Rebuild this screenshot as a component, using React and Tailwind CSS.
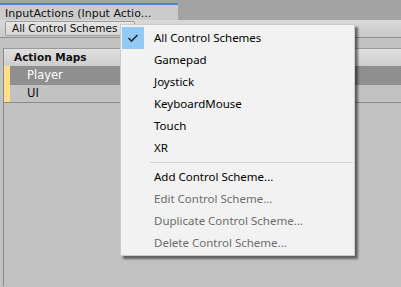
export default function App() {
  const items = ["All Control Schemes", "Gamepad", "Joystick", "KeyboardMouse", "Touch", "XR"];
  const actions = [
    { t: "Add Control Scheme...", d: false },
    { t: "Edit Control Scheme...", d: true },
    { t: "Duplicate Control Scheme...", d: true },
    { t: "Delete Control Scheme...", d: true },
  ];
  const unity = { fontFamily: '"DejaVu Sans", Verdana, sans-serif' };
  const seg = { fontFamily: '"Noto Sans", "Open Sans", sans-serif' };
  return (
    <div className="relative w-[401px] h-[287px] overflow-hidden bg-[#c2c2c2]" style={unity}>
      {/* tab strip */}
      <div className="h-[20px] bg-[#a3a3a3] flex items-end">
        <div className="w-[178px] h-[17px] bg-[#cbcbcb] border-t-2 border-[#4d86c9] flex items-center pl-[5px] pt-[1px] text-[11px] text-[#111] leading-none">
          InputActions (Input Actio...
        </div>
      </div>
      {/* toolbar */}
      <div className="h-[18px] bg-gradient-to-b from-[#d9d9d9] to-[#c9c9c9] border-b border-[#8f8f8f] flex items-center pl-[5px]">
        <div className="h-[15px] w-[130px] bg-gradient-to-b from-[#e6e6e6] to-[#d6d6d6] border border-[#9c9c9c] rounded-[2px] flex items-center pl-[6px] text-[10.5px] text-[#111] leading-none">
          All Control Schemes <span className="ml-[4px] text-[8px]">▾</span>
        </div>
      </div>
      {/* body */}
      <div className="pt-[10px] pl-[3px] h-[248px]">
        <div className="h-full border-l border-[#8a8a8a]">
          <div className="h-[18px] bg-gradient-to-b from-[#e0e0e0] to-[#cdcdcd] border-t border-[#9a9a9a] flex items-center pl-[10px] pt-[1px] text-[10.5px] font-bold text-[#111]">
            Action Maps
          </div>
          <div className="h-[19px] bg-[#8f8f8f] flex items-center text-white text-[11.5px]">
            <div className="w-[6px] h-full bg-[#ffdf8c]" />
            <span className="ml-[17px]">Player</span>
          </div>
          <div className="h-[18px] bg-[#c2c2c2] border-b border-[#8a8a8a] flex items-center text-[#111] text-[11.5px]">
            <div className="w-[6px] h-full bg-[#ffdf8c]" />
            <span className="ml-[17px]">UI</span>
          </div>
        </div>
      </div>
      {/* menu */}
      <div
        className="absolute left-[120px] top-[24px] w-[235px] h-[232px] bg-[#f2f2f2] border border-[#cccccc] shadow-[3px_3px_2px_rgba(0,0,0,0.5)] pt-[2px]"
        style={seg}
      >
        {items.map((t, i) => (
          <div key={t} className="h-[22px] flex items-center text-[11.5px] text-black">
            <div className="w-[32px] h-[22px] flex items-center pl-[1px]">
              {i === 0 && (
                <div className="w-[22px] h-[22px] bg-[#91c9f7] flex items-center justify-center">
                  <svg width="12" height="10" viewBox="0 0 12 10">
                    <path d="M1.5 5 L4.5 8 L10.5 2" fill="none" stroke="#2b2b2b" strokeWidth="1.6" />
                  </svg>
                </div>
              )}
            </div>
            <span className="ml-[1px]">{t}</span>
          </div>
        ))}
        <div className="h-[7px] flex items-center pl-[29px] pr-[1px]">
          <div className="h-px w-full bg-[#d2d2d2]" />
        </div>
        {actions.map((a) => (
          <div key={a.t} className={`h-[22px] flex items-center pl-[33px] text-[11.5px] ${a.d ? "text-[#6d6d6d]" : "text-black"}`}>
            {a.t}
          </div>
        ))}
      </div>
    </div>
  );
}
